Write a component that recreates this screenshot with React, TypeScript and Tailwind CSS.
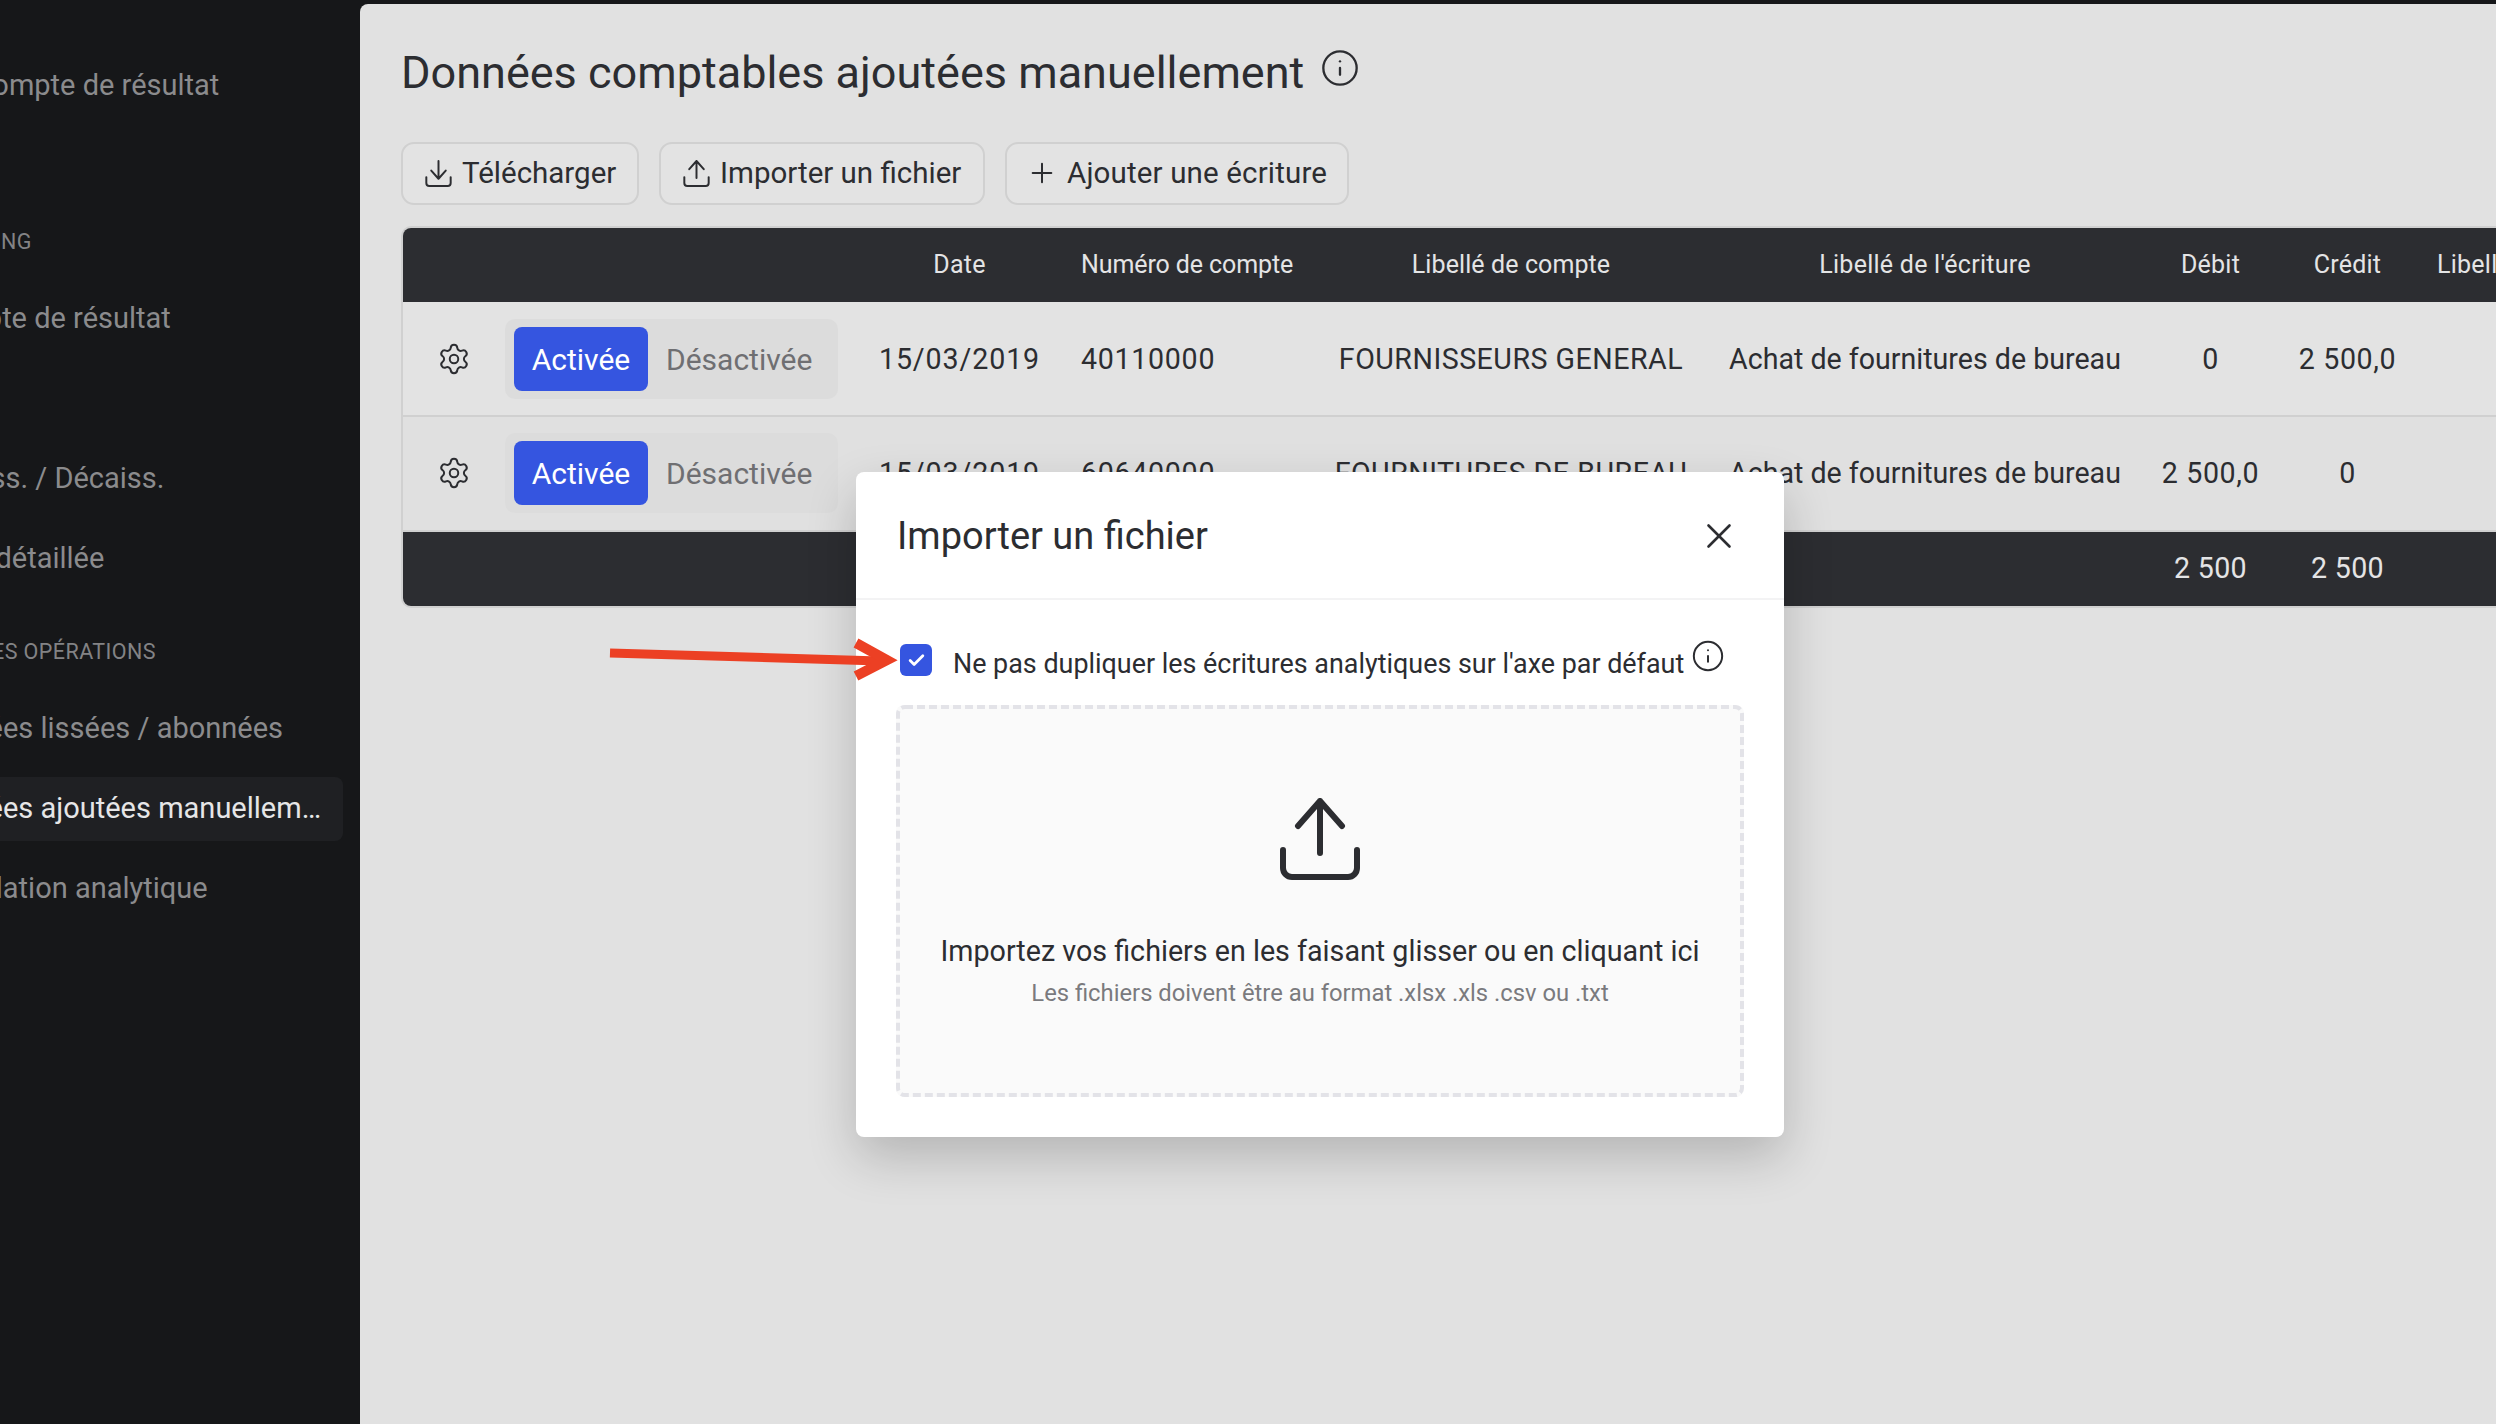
import { Check, Info, Plus, Settings, X } from "lucide-react"

const gridCols = "grid grid-cols-[81px_375px_201px_254px_394px_434px_137px_137px_300px] items-center"

const rows = [
  { date: "15/03/2019", account: "40110000", label: "FOURNISSEURS GENERAL", entry: "Achat de fournitures de bureau", debit: "0", credit: "2 500,0" },
  { date: "15/03/2019", account: "60640000", label: "FOURNITURES DE BUREAU", entry: "Achat de fournitures de bureau", debit: "2 500,0", credit: "0" },
]

function TrayArrow({ up, className, strokeWidth }: { up: boolean; className: string; strokeWidth: number }) {
  return (
    <svg viewBox="0 0 80 82" fill="none" stroke="currentColor" strokeWidth={strokeWidth} strokeLinecap="round" strokeLinejoin="round" className={className}>
      {up ? <path d="M40 3V55M18 28L40 3L62 28" /> : <path d="M40 3V55M18 32L40 57L62 32" />}
      <path d="M3 52V70a9 9 0 0 0 9 9H68a9 9 0 0 0 9-9V52" />
    </svg>
  )
}

function SideItem({ text, offset, active }: { text: string; offset: string; active?: boolean }) {
  return (
    <div className={`h-[64px] flex items-center rounded-r-lg w-[343px] ${active ? "bg-[#1f2023] text-[#e6e6e7]" : "text-[#8b8b8d]"}`}>
      <span className={`${offset} w-[402px] shrink-0 truncate`}>{text}</span>
    </div>
  )
}

function SideLabel({ text, offset }: { text: string; offset: string }) {
  return <div className={`${offset} h-[30px] flex items-center text-[21.5px] tracking-[0.02em] text-[#838385] whitespace-nowrap`}>{text}</div>
}

function Toolbar() {
  const btn = "h-[63px] flex items-center rounded-[13px] border-2 border-[#d0d0d0] bg-[#e3e3e3] text-[#2c2d31]"
  return (
    <div className="mt-[35px] flex gap-[20px] text-[29.5px]">
      <button className={`${btn} w-[238px] pl-[22px] gap-[10px]`}>
        <TrayArrow up={false} strokeWidth={6} className="w-[27px] h-[27px]" />
        <span>Télécharger</span>
      </button>
      <button className={`${btn} w-[326px] pl-[22px] gap-[10px]`}>
        <TrayArrow up strokeWidth={6} className="w-[27px] h-[27px]" />
        <span>Importer un fichier</span>
      </button>
      <button className={`${btn} w-[344px] pl-[19px] gap-[9px]`}>
        <Plus className="w-[32px] h-[32px]" strokeWidth={1.5} />
        <span className="tracking-[0.15px]">Ajouter une écriture</span>
      </button>
    </div>
  )
}

function Table() {
  return (
    <div className="mt-[21px] w-[2400px] rounded-[10px] overflow-hidden border-2 border-[#d0d0d0] text-[28.6px]">
      <div className={`${gridCols} h-[74px] bg-[#2c2d31] text-[#e4e4e5] text-[25px] tracking-[0.01em]`}>
        <div />
        <div />
        <div className="text-center">Date</div>
        <div className="pl-[21px] tracking-[-0.1px]">Numéro de compte</div>
        <div className="text-center tracking-[0.1px]">Libellé de compte</div>
        <div className="text-center">Libellé de l'écriture</div>
        <div className="text-center">Débit</div>
        <div className="text-center">Crédit</div>
        <div className="pl-[21px]">Libellé analytique</div>
      </div>
      {rows.map((r, i) => (
        <div key={i} className={`${gridCols} h-[115px] border-b-2 border-[#d0d0d0] text-[#2c2d31] ${i === 0 ? "pt-[2px] bg-[#e3e3e3]" : "bg-[#e0e0e0]"}`}>
          <div className="flex justify-center pl-[20px]">
            <Settings className="w-[34px] h-[34px]" strokeWidth={1.4} />
          </div>
          <div className="pl-[21px]">
            <div className="w-[333px] h-[80px] rounded-[10px] bg-[#dcdcdc] flex items-center pl-[9px] text-[30px]">
              <span className="w-[134px] h-[64px] rounded-lg bg-[#3555e0] text-white flex items-center justify-center">Activée</span>
              <span className="ml-[18px] text-[#6f6f72]">Désactivée</span>
            </div>
          </div>
          <div className="text-center tracking-[0.9px]">{r.date}</div>
          <div className="pl-[21px] tracking-[0.7px]">{r.account}</div>
          <div className="text-center whitespace-nowrap tracking-[0.5px]">{r.label}</div>
          <div className="text-center whitespace-nowrap">{r.entry}</div>
          <div className="text-center tracking-[0.6px]">{r.debit}</div>
          <div className="text-center tracking-[0.6px]">{r.credit}</div>
          <div />
        </div>
      ))}
      <div className={`${gridCols} h-[74px] bg-[#2c2d31] text-[#e4e4e5] tracking-[0.3px]`}>
        <div />
        <div />
        <div />
        <div />
        <div />
        <div />
        <div className="text-center">2 500</div>
        <div className="text-center">2 500</div>
        <div />
      </div>
    </div>
  )
}

function ImportModal() {
  return (
    <div className="absolute left-[856px] top-[472px] w-[928px] h-[665px] rounded-lg bg-white shadow-[0_20px_50px_rgba(0,0,0,0.2)] text-[#2c2d31]">
      <div className="h-[128px] border-b-2 border-[#f3f3f4] flex items-center justify-between pl-[41px] pr-[44px]">
        <h2 className="text-[38px] mt-[2px]">Importer un fichier</h2>
        <X className="w-[42px] h-[42px] mt-[2px]" strokeWidth={1.5} />
      </div>
      <div className="px-[40px]">
        <div className="h-[105px] flex items-center pt-[15px]">
          <span className="ml-[4px] w-[32px] h-[32px] rounded-md bg-[#3555e0] text-white flex items-center justify-center">
            <Check className="w-[19px] h-[19px]" strokeWidth={3.5} />
          </span>
          <span className="ml-[21px] text-[26.9px] mt-[8px]">Ne pas dupliquer les écritures analytiques sur l'axe par défaut</span>
          <Info className="ml-[7px] -mt-[8px] w-[34px] h-[34px]" strokeWidth={1.4} />
        </div>
        <div className="relative h-[392px] rounded-lg bg-[#fafafa] flex flex-col items-center pt-[93px]">
          <svg className="absolute inset-0 w-[848px] h-[392px]" fill="none" stroke="#e3e3e8" strokeWidth="4" strokeDasharray="8 4">
            <rect x="2" y="2" width="844" height="388" rx="7" />
          </svg>
          <TrayArrow up strokeWidth={6} className="w-[80px] h-[82px]" />
          <div className="mt-[50px] text-[28.7px]">Importez vos fichiers en les faisant glisser ou en cliquant ici</div>
          <div className="mt-[3px] text-[23.8px] text-[#7a7a7e]">Les fichiers doivent être au format .xlsx .xls .csv ou .txt</div>
        </div>
      </div>
    </div>
  )
}

export default function App() {
  return (
    <div className="relative w-[2496px] h-[1424px] overflow-hidden flex bg-[#161719] font-['Roboto',sans-serif]">
      <aside className="w-[360px] shrink-0 overflow-hidden text-[29px] pt-[53.5px]">
        <SideItem offset="-ml-[61px]" text="Le compte de résultat" />
        <div className="mt-[109.5px]"><SideLabel offset="-ml-[87px]" text="REPORTING" /></div>
        <div className="mt-[30px]"><SideItem offset="-ml-[75px]" text="Compte de résultat" /></div>
        <div className="mt-[96px]"><SideItem offset="-ml-[80px]" text="Encaiss. / Décaiss." /></div>
        <div className="mt-[16px]"><SideItem offset="-ml-[115px]" text="Balance détaillée" /></div>
        <div className="mt-[46px]"><SideLabel offset="-ml-[20px]" text="LES OPÉRATIONS" /></div>
        <div className="mt-[30px]"><SideItem offset="-ml-[80px]" text="Données lissées / abonnées" /></div>
        <div className="mt-[16px]"><SideItem active offset="-ml-[80px]" text="Données ajoutées manuellement" /></div>
        <div className="mt-[16px]"><SideItem offset="-ml-[70px]" text="Ventilation analytique" /></div>
      </aside>
      <main className="flex-1 mt-[4px] rounded-tl-lg bg-[#e1e1e1] pl-[41px] overflow-hidden">
        <div className="mt-[35px] flex items-center gap-[16px] text-[#2c2d31]">
          <h1 className="text-[45px] whitespace-nowrap">Données comptables ajoutées manuellement</h1>
          <Info className="w-[40px] h-[40px] -mt-[10px]" strokeWidth={1.4} />
        </div>
        <Toolbar />
        <Table />
      </main>
      <ImportModal />
      <svg viewBox="0 0 300 50" className="absolute left-[600px] top-[635px] w-[300px] h-[50px]" fill="none" stroke="#ec4024" strokeWidth="9">
        <path d="M10 18L280 26" />
        <path d="M256 8L287 25L256 41" strokeWidth="10" />
      </svg>
    </div>
  )
}
